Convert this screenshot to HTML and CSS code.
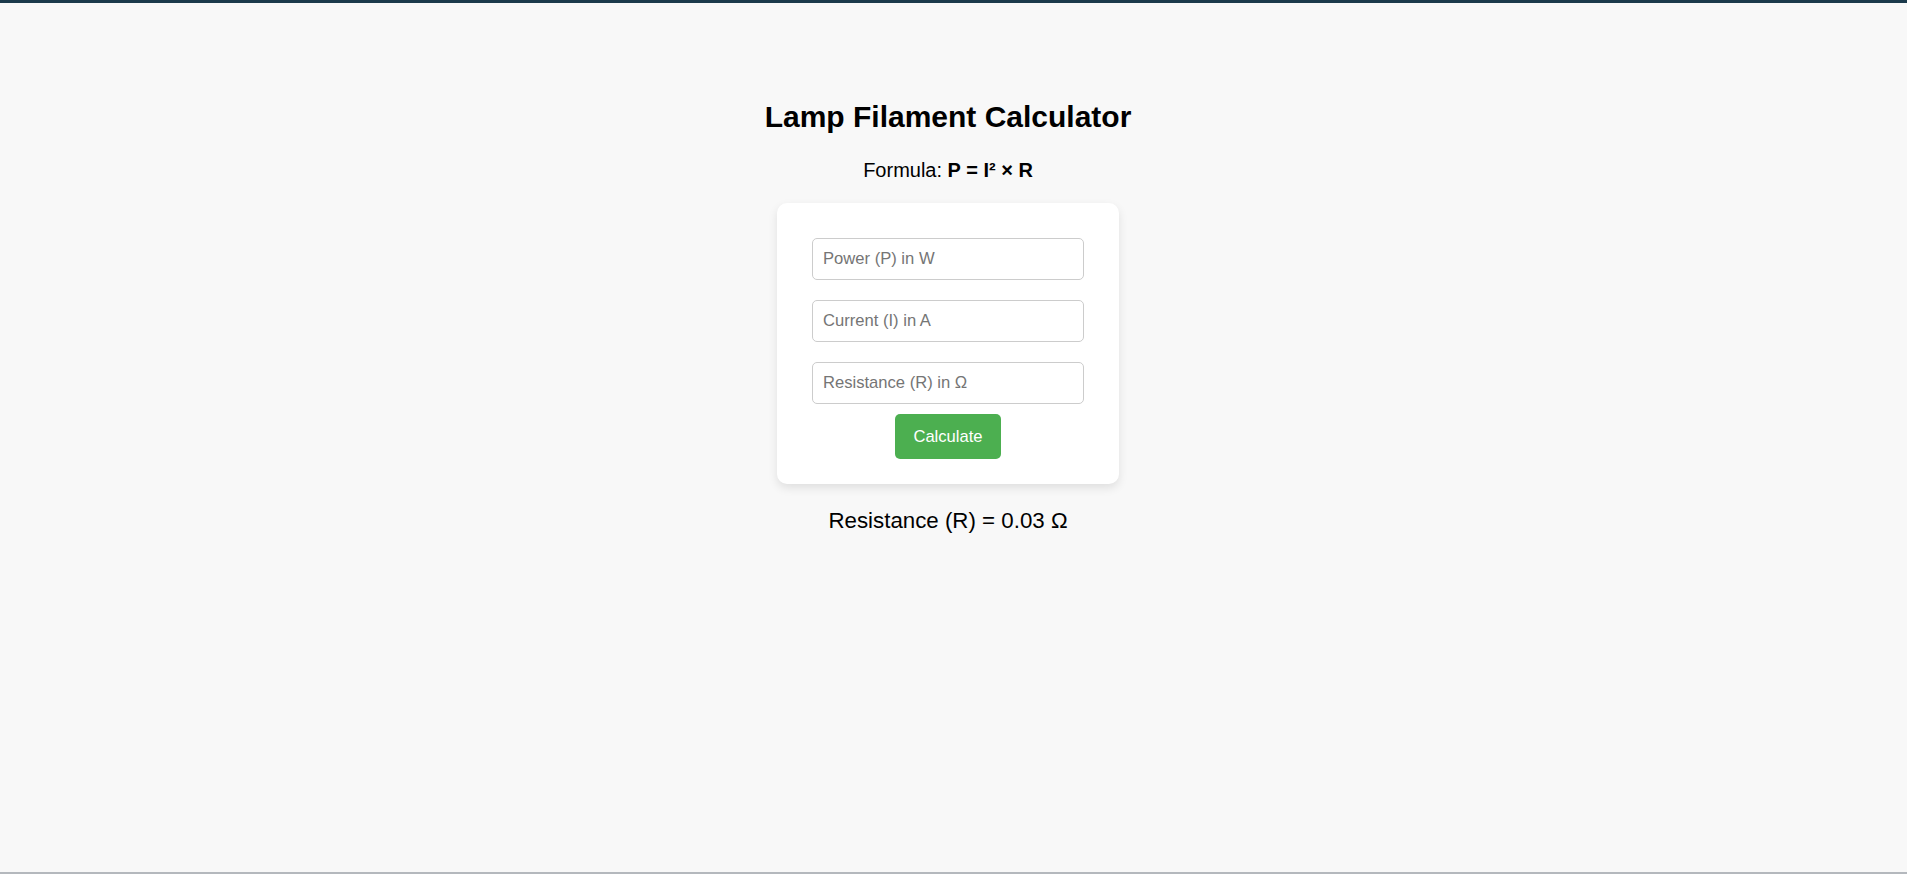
FILE: index.html
```html
<!DOCTYPE html>
<html lang="en">
<head>
<meta charset="utf-8">
<title>Lamp Filament Calculator</title>
<link rel="stylesheet" href="styles.css">
</head>
<body>
<main class="app">
  <h1 class="title">Lamp Filament Calculator</h1>
  <p class="formula">Formula: <strong>P = I² × R</strong></p>
  <div class="card">
    <input class="field" type="number" placeholder="Power (P) in W">
    <input class="field" type="number" placeholder="Current (I) in A">
    <input class="field field-last" type="number" placeholder="Resistance (R) in Ω">
    <button class="btn" type="button">Calculate</button>
  </div>
  <p class="result">Resistance (R) = 0.03 Ω</p>
</main>
</body>
</html>
```

FILE: styles.css
```css
html, body {
  margin: 0;
  padding: 0;
}
body {
  background: #f8f8f8;
  font-family: "Liberation Sans", Arial, sans-serif;
  color: #000;
}
.app {
  box-sizing: border-box;
  height: 874px;
  border-top: 3px solid #1b3a4b;
  border-bottom: 2px solid #b4b8bd;
  padding: 97px 11px 0 0;
  display: flex;
  flex-direction: column;
  align-items: center;
}
.title {
  margin: 0;
  font-size: 30px;
  line-height: 34px;
  font-weight: bold;
}
.formula {
  margin: 25px 0 0;
  font-size: 20px;
  line-height: 23px;
}
.card {
  margin-top: 21px;
  box-sizing: border-box;
  width: 342px;
  padding: 35px 35px 25px;
  background: #fff;
  border-radius: 10px;
  box-shadow: 0 4px 10px rgba(0, 0, 0, 0.1);
  display: flex;
  flex-direction: column;
  align-items: center;
}
.field {
  box-sizing: border-box;
  width: 272px;
  height: 42px;
  margin: 0 0 20px;
  padding: 0 10px;
  border: 1px solid #ccc;
  border-radius: 5px;
  font-family: "Liberation Sans", Arial, sans-serif;
  font-size: 16.6px;
  background: #fff;
  outline: none;
}
.field::placeholder {
  color: #757575;
}
.field-last {
  margin-bottom: 10px;
}
.btn {
  box-sizing: border-box;
  width: 106px;
  height: 45px;
  border: none;
  border-radius: 5px;
  background: #4caf50;
  color: #fff;
  font-family: "Liberation Sans", Arial, sans-serif;
  font-size: 16.6px;
  padding: 0;
}
.result {
  margin: 24px 0 0;
  font-size: 22.3px;
  line-height: 26px;
}
```
